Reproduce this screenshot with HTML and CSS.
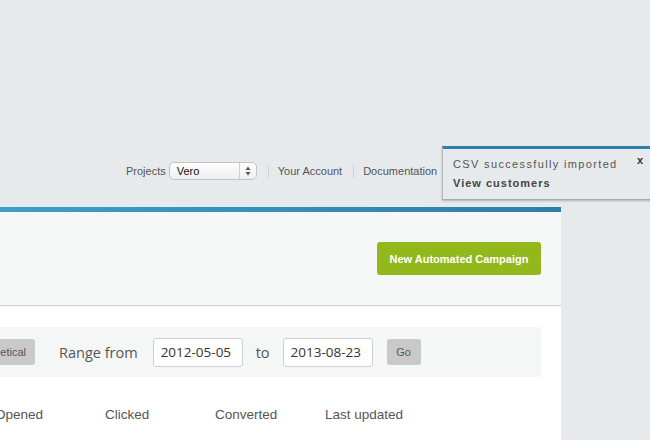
FILE: index.html
```html
<!DOCTYPE html>
<html>
<head>
<meta charset="utf-8">
<link rel="stylesheet" href="styles.css">
</head>
<body>
<header class="topbar">
  <nav class="nav">
    <span class="nav-label">Projects</span>
    <div class="select">
      <span class="select-value">Vero</span>
      <span class="select-arrows">
        <svg width="6" height="10" viewBox="0 0 6 10"><path d="M3 0.5L5.5 4H0.5Z" fill="#555"/><path d="M3 9.5L5.5 6H0.5Z" fill="#555"/></svg>
      </span>
    </div>
    <span class="sep"></span>
    <a class="nav-link">Your Account</a>
    <span class="sep"></span>
    <a class="nav-link">Documentation</a>
  </nav>
</header>

<div class="notice">
  <div class="notice-title">CSV successfully imported</div>
  <div class="notice-link">View customers</div>
  <span class="notice-close">x</span>
</div>

<main class="main">
  <section class="panel-top">
    <button class="btn-green">New Automated Campaign</button>
  </section>
  <section class="content">
    <div class="filterbar">
      <button class="btn-gray btn-sort">Alphabetical</button>
      <span class="range-label">Range from</span>
      <input class="date" value="2012-05-05">
      <span class="range-to">to</span>
      <input class="date" value="2013-08-23">
      <button class="btn-gray btn-go">Go</button>
    </div>
    <div class="thead">
      <span class="th">Opened</span>
      <span class="th">Clicked</span>
      <span class="th">Converted</span>
      <span class="th">Last updated</span>
    </div>
  </section>
</main>
</body>
</html>
```
FILE: styles.css
```css
* { box-sizing: border-box; }
html, body { margin: 0; padding: 0; }
body {
  width: 650px;
  height: 440px;
  overflow: hidden;
  background: #e7eaec;
  font-family: "Liberation Sans", Arial, sans-serif;
  position: relative;
}
.topbar {
  height: 207px;
  padding-top: 162px;
  padding-left: 126px;
}
.nav {
  display: flex;
  align-items: center;
  height: 18px;
}
.nav-label, .nav-link {
  font-size: 11px;
  color: #555;
}
.nav-label { margin-right: 3px; }
.select {
  width: 88px;
  height: 18px;
  border: 1px solid #c4c4c4;
  border-radius: 5px;
  background: linear-gradient(#ffffff, #eeeeee);
  display: flex;
  align-items: center;
  box-shadow: inset 0 1px 0 #fff;
}
.select-value {
  flex: 1;
  font-size: 11px;
  color: #111;
  padding-left: 7px;
}
.select-arrows {
  width: 17px;
  height: 16px;
  border-left: 1px solid #d0d0d0;
  display: flex;
  align-items: center;
  justify-content: center;
}
.select-arrows svg { display: block; }
.sep {
  width: 1px;
  height: 13px;
  background: #cfd2d4;
  margin: 0 9px 0 11px;
}

.notice {
  position: absolute;
  left: 442px;
  top: 146px;
  width: 216px;
  height: 54px;
  background: #e7eaec;
  border-top: 3px solid #2f7fad;
  border-left: 1px solid #b8babc;
  border-bottom: 1px solid #a9abad;
  box-shadow: 0 1px 2px rgba(0,0,0,0.25);
  padding: 8px 0 0 10px;
  color: #555;
}
.notice-title {
  font-size: 11px;
  letter-spacing: 1.35px;
  line-height: 14px;
}
.notice-link {
  font-size: 11px;
  font-weight: bold;
  letter-spacing: 1px;
  color: #444;
  margin-top: 5px;
  line-height: 14px;
}
.notice-close {
  position: absolute;
  right: 15px;
  top: 5px;
  font-size: 11px;
  font-weight: bold;
  color: #333;
}

.main {
  width: 561px;
}
.panel-top {
  height: 98px;
  border-top: 5px solid #3b98c6;
  border-image: linear-gradient(90deg, #409dca, #2c7fa9) 1;
  border-left: 0;
  border-right: 0;
  border-bottom: 0;
  background: #f6f7f7;
  box-shadow: 0 1px 0 #cdcfd0;
  display: flex;
  justify-content: flex-end;
  align-items: flex-start;
  padding: 30px 20px 0 0;
}
.btn-green {
  width: 164px;
  height: 33px;
  border: 0;
  border-radius: 3px;
  background: #93b81b;
  color: #fff;
  font-family: "Liberation Sans", Arial, sans-serif;
  font-size: 11px;
  font-weight: bold;
  padding: 0;
}
.content {
  background: #fff;
  height: 136px;
  padding-top: 21px;
  margin-top: 1px;
}
.filterbar {
  height: 50px;
  margin-right: 20px;
  background: #f5f6f6;
  display: flex;
  align-items: center;
  overflow: hidden;
}
.btn-gray {
  border: 0;
  border-radius: 3px;
  background: #c9c9c9;
  color: #555;
  font-family: "Liberation Sans", Arial, sans-serif;
  font-size: 11px;
  height: 26px;
  padding: 0;
}
.btn-sort {
  width: 80px;
  margin-left: -45px;
  text-align: right;
  padding-right: 9px;
  flex: none;
}
.range-label {
  font-family: "Open Sans", "Liberation Sans", sans-serif;
  font-size: 14.5px;
  color: #555;
  margin-left: 24px;
  margin-right: 15px;
}
.date {
  width: 90px;
  height: 29px;
  border: 1px solid #cfcfcf;
  border-radius: 3px;
  background: #fff;
  font-family: "Open Sans", "Liberation Sans", sans-serif;
  font-size: 13.5px;
  color: #333;
  padding: 0 0 0 7px;
  outline: none;
}
.range-to {
  font-family: "Open Sans", "Liberation Sans", sans-serif;
  font-size: 14.5px;
  color: #555;
  margin: 0 13px;
}
.btn-go {
  width: 34px;
  margin-left: 14px;
}
.thead {
  display: flex;
  margin-left: -5px;
  margin-top: 30px;
}
.th {
  width: 110px;
  font-size: 13.5px;
  color: #555;
}
```
